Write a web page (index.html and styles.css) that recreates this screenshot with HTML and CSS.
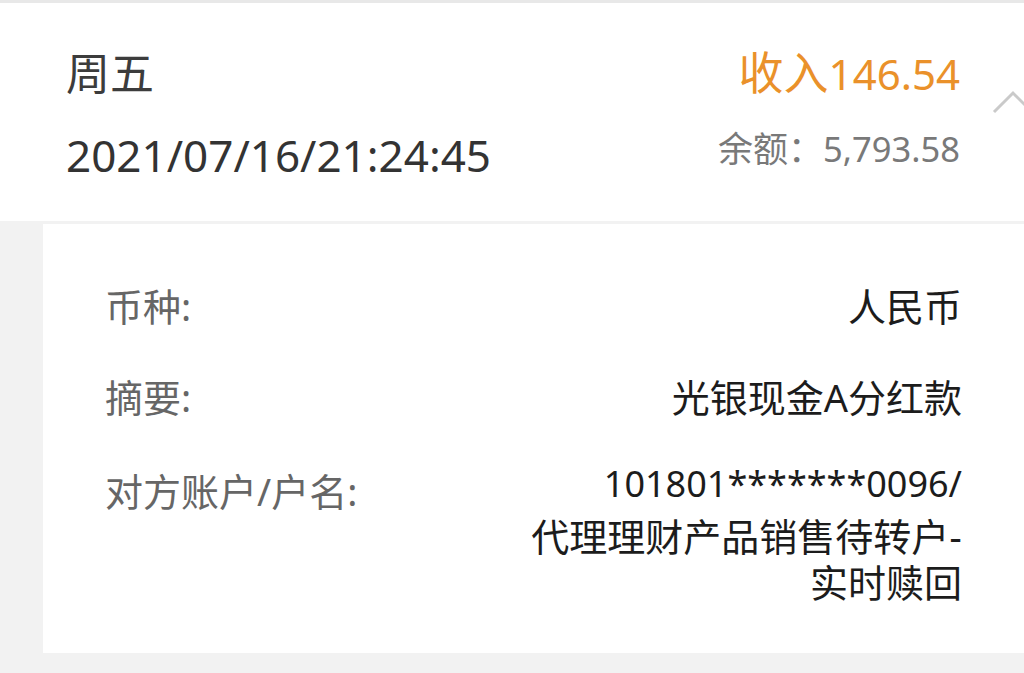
FILE: index.html
```html
<!DOCTYPE html>
<html lang="zh-CN">
<head>
<meta charset="utf-8">
<link rel="stylesheet" href="styles.css">
</head>
<body>
<div class="topline"></div>
<header class="head">
  <div class="head-left">
    <div class="weekday">周五</div>
    <div class="datetime">2021/07/16/21:24:45</div>
  </div>
  <div class="head-right">
    <div class="amount">收入<span class="amount-num">146.54</span></div>
    <div class="balance">余额：<span class="balance-num">5,793.58</span></div>
  </div>
  <svg class="chevron" width="46" height="28" viewBox="0 0 46 28"><path d="M4 23 L23 4 L42 23" fill="none" stroke="#cacaca" stroke-width="3"/></svg>
</header>
<section class="card">
  <div class="row">
    <div class="label">币种:</div>
    <div class="value">人民币</div>
  </div>
  <div class="row">
    <div class="label">摘要:</div>
    <div class="value">光银现金A分红款</div>
  </div>
  <div class="row row-account">
    <div class="label">对方账户/户名:</div>
    <div class="value multi"><span class="num-line">101801*******0096/</span><span class="cjk-line first">代理理财产品销售待转户-</span><span class="cjk-line">实时赎回</span></div>
  </div>
</section>
</body>
</html>
```
FILE: styles.css
```css
html, body {
  margin: 0;
  padding: 0;
}
body {
  width: 1024px;
  height: 673px;
  overflow: hidden;
  background: #f2f2f2;
  font-family: "Noto Sans", "Noto Sans CJK SC", sans-serif;
}
.topline {
  height: 3px;
  background: #e8e8e8;
}
.head {
  position: relative;
  height: 218px;
  background: #ffffff;
  display: flex;
  justify-content: space-between;
  padding: 0 64px 0 66px;
  box-sizing: border-box;
}
.head-left {
  padding-top: 48px;
}
.weekday {
  font-size: 44px;
  line-height: 44px;
  color: #3c3c3c;
}
.datetime {
  font-size: 44px;
  line-height: 44px;
  margin-top: 38px;
  color: #333333;
}
.head-right {
  padding-top: 48px;
  text-align: right;
}
.amount {
  font-size: 45px;
  line-height: 44px;
  color: #ea912a;
}
.amount-num {
  font-size: 42px;
}
.balance {
  font-size: 35px;
  line-height: 40px;
  margin-top: 33px;
  color: #797979;
}
.balance-num {
  font-size: 34.5px;
}
.chevron {
  position: absolute;
  right: -12px;
  top: 86px;
}
.card {
  margin: 3px 0 0 43px;
  height: 429px;
  background: #ffffff;
  padding: 59px 62px 0 62px;
  box-sizing: border-box;
  display: flex;
  flex-direction: column;
  gap: 45px;
}
.row {
  display: flex;
  justify-content: space-between;
  align-items: flex-start;
}
.row-account {
  margin-top: -4px;
}
.row-account .label {
  margin-top: 7px;
}
.label {
  font-size: 38px;
  line-height: 46px;
  color: #666666;
  white-space: nowrap;
}
.value {
  font-size: 38px;
  line-height: 46px;
  color: #1c1c1c;
  text-align: right;
}
.multi span {
  display: block;
}
.multi .num-line {
  font-size: 36px;
  margin-bottom: 6px;
}
.multi .cjk-line {
  font-family: "Liberation Sans", "Noto Sans CJK SC", sans-serif;
}
.multi .cjk-line.first {
  padding-top: 2px;
}
```
